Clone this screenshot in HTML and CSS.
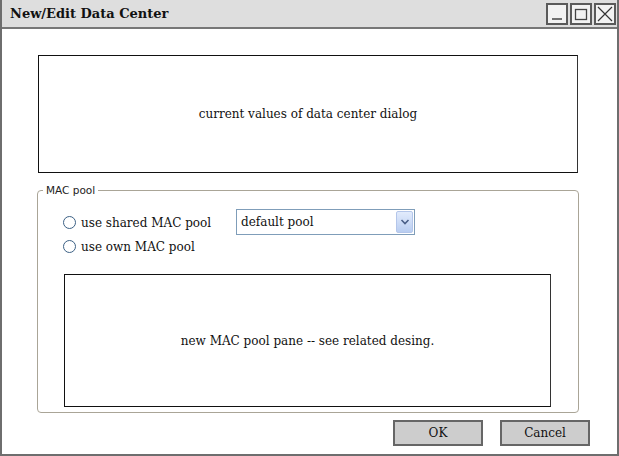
FILE: index.html
```html
<!DOCTYPE html>
<html>
<head>
<meta charset="utf-8">
<link rel="stylesheet" href="styles.css">
</head>
<body>
<div class="window">
  <div class="titlebar">
    <span class="title">New/Edit Data Center</span>
    <div class="winbtns">
      <span class="wbtn"><svg width="18" height="18" viewBox="0 0 18 18"><line x1="4" y1="14" x2="14" y2="14" stroke="#444" stroke-width="1.5"/></svg></span>
      <span class="wbtn"><svg width="18" height="18" viewBox="0 0 18 18"><rect x="3.5" y="4.5" width="11" height="10" fill="none" stroke="#444" stroke-width="1.3"/></svg></span>
      <span class="wbtn"><svg width="18" height="18" viewBox="0 0 18 18"><path d="M2 2 L16 16 M16 2 L2 16" stroke="#333" stroke-width="1.2"/></svg></span>
    </div>
  </div>
  <div class="content">
    <div class="sketch box1">current values of data center dialog</div>
    <fieldset class="group">
      <legend>MAC pool</legend>
      <div class="options">
        <div class="radios">
          <label class="radio"><span class="circle"></span>use shared MAC pool</label>
          <label class="radio"><span class="circle"></span>use own MAC pool</label>
        </div>
        <div class="select">
          <span>default pool</span>
          <span class="arrow"><svg width="10" height="6" viewBox="0 0 10 6"><path d="M1.5 1 L5 4.5 L8.5 1" fill="none" stroke="#4a5f87" stroke-width="1.6"/></svg></span>
        </div>
      </div>
      <div class="sketch box2">new MAC pool pane -- see related desing.</div>
    </fieldset>
    <div class="actions">
      <button class="btn">OK</button>
      <button class="btn">Cancel</button>
    </div>
  </div>
</div>
</body>
</html>
```

FILE: styles.css
```css
html, body {
  margin: 0;
  padding: 0;
  background: #fff;
}
body {
  font-family: "DejaVu Serif", serif;
  font-size: 12px;
  color: #111;
}
.window {
  width: 619px;
  height: 456px;
  box-sizing: border-box;
  border: 2px solid #6e6e6e;
  border-top: none;
  display: flex;
  flex-direction: column;
}
.titlebar {
  height: 27px;
  background: #dedede;
  border-bottom: 2px solid #777;
  display: flex;
  align-items: center;
  justify-content: space-between;
  padding-left: 8px;
  padding-right: 1px;
}
.title {
  font-weight: bold;
  font-size: 13px;
  color: #111;
}
.winbtns {
  display: flex;
  gap: 2px;
  align-self: flex-start;
  margin-top: 3px;
}
.wbtn {
  width: 18px;
  height: 18px;
  border: 2px solid #5a5a5a;
  background: #f2f2f2;
  display: block;
}
.wbtn svg { display: block; }
.content {
  flex: 1;
  padding: 26px 38px 0 36px;
  display: flex;
  flex-direction: column;
}
.sketch {
  border: 1px solid #111;
  border-color: #111 #333 #111 #111;
  display: flex;
  align-items: center;
  justify-content: center;
  box-sizing: border-box;
}
.box1 {
  height: 118px;
  margin-left: 0;
  margin-right: 1px;
}
.group {
  margin: 11px 1px 0 -1px;
  border: 1px solid #aaa597;
  border-radius: 4px;
  padding: 13px 27px 4px 25px;
  height: 229px;
  box-sizing: border-box;
}
.group legend {
  font-family: "DejaVu Sans", sans-serif;
  font-size: 10.5px;
  padding: 0 3px;
  margin-left: -20px;
  color: #222;
}
.options {
  display: flex;
  align-items: flex-start;
}
.radios {
  width: 173px;
  display: flex;
  flex-direction: column;
  gap: 11px;
  padding-top: 7px;
}
.radio {
  display: flex;
  align-items: center;
  gap: 5px;
  height: 13px;
}
.circle {
  width: 11px;
  height: 11px;
  border: 1px solid #3c6185;
  border-radius: 50%;
  background: #fff;
  display: inline-block;
}
.select {
  width: 179px;
  height: 26px;
  box-sizing: border-box;
  border: 1px solid #7f9db9;
  display: flex;
  align-items: center;
  justify-content: space-between;
  padding: 0 1px 0 4px;
}
.arrow {
  width: 15px;
  height: 20px;
  background: linear-gradient(#e2ebfc, #b9cdf1);
  border: 1px solid #b4c6ea;
  border-radius: 2px;
  display: flex;
  align-items: center;
  justify-content: center;
}
.box2 {
  margin-top: 21px;
  margin-left: 1px;
  width: 487px;
  height: 133px;
}
.actions {
  display: flex;
  justify-content: flex-end;
  gap: 17px;
  margin-top: 7px;
  padding-right: 0;
  margin-right: -11px;
}
.btn {
  width: 90px;
  height: 26px;
  background: #cdcdcd;
  border: 2px solid #666;
  font-family: "DejaVu Serif", serif;
  font-size: 12px;
  color: #111;
  padding: 0;
}
```
